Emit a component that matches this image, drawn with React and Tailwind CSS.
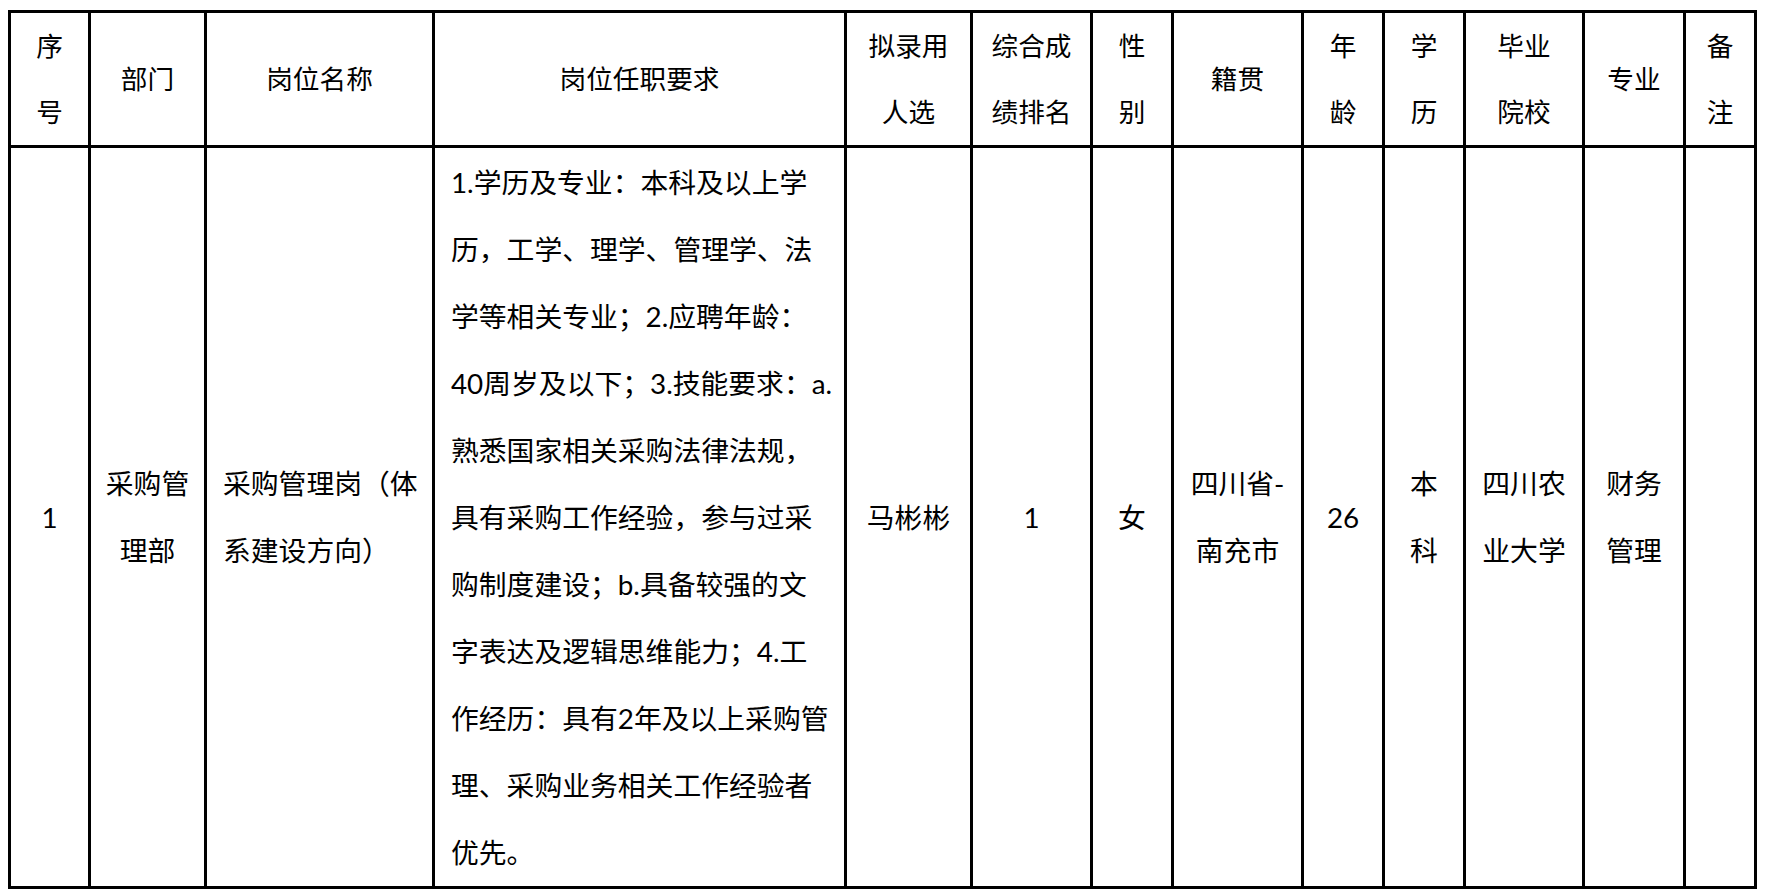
import React from "react";

const head = [
  { w: "w-[80px]", lines: ["序", "号"] },
  { w: "w-[116px]", lines: ["部门"] },
  { w: "w-[228px]", lines: ["岗位名称"] },
  { w: "w-[412px]", lines: ["岗位任职要求"] },
  { w: "w-[126px]", lines: ["拟录用", "人选"] },
  { w: "w-[120px]", lines: ["综合成", "绩排名"] },
  { w: "w-[81px]", lines: ["性", "别"] },
  { w: "w-[130px]", lines: ["籍贯"] },
  { w: "w-[81px]", lines: ["年", "龄"] },
  { w: "w-[81px]", lines: ["学", "历"] },
  { w: "w-[119px]", lines: ["毕业", "院校"] },
  { w: "w-[101px]", lines: ["专业"] },
  { w: "w-[71px]", lines: ["备", "注"] },
];

const requirement = [
  "1.学历及专业：本科及以上学",
  "历，工学、理学、管理学、法",
  "学等相关专业；2.应聘年龄：",
  "40周岁及以下；3.技能要求：a.",
  "熟悉国家相关采购法律法规，",
  "具有采购工作经验，参与过采",
  "购制度建设；b.具备较强的文",
  "字表达及逻辑思维能力；4.工",
  "作经历：具有2年及以上采购管",
  "理、采购业务相关工作经验者",
  "优先。",
];

const row = [
  { lines: ["1"] },
  { lines: ["采购管", "理部"] },
  { lines: ["采购管理岗（体", "系建设方向）"], left: true },
  { lines: requirement, left: true },
  { lines: ["马彬彬"] },
  { lines: ["1"] },
  { lines: ["女"] },
  { lines: ["四川省-", "南充市"] },
  { lines: ["26"] },
  { lines: ["本", "科"] },
  { lines: ["四川农", "业大学"] },
  { lines: ["财务", "管理"] },
  { lines: [] },
];

function Lines({ lines }) {
  return lines.map((l, i) => (
    <div key={i} className="whitespace-nowrap">
      {l}
    </div>
  ));
}

export default function App() {
  return (
    <div className="min-h-screen bg-white pt-[10px] pl-[8px] text-black font-[family-name:Lato,'Noto_Sans_CJK_SC',sans-serif]">
      <table className="table-fixed border-separate border-spacing-0 w-[1749px] border-l-[3px] border-t-[3px] border-black">
        <colgroup>
          {head.map((h, i) => (
            <col key={i} className={h.w} />
          ))}
        </colgroup>
        <thead>
          <tr>
            {head.map((h, i) => (
              <th
                key={i}
                className="h-[135px] p-0 border-r-[3px] border-b-[3px] border-black align-middle text-center font-normal text-[26.67px] leading-[66px]"
              >
                <Lines lines={h.lines} />
              </th>
            ))}
          </tr>
        </thead>
        <tbody>
          <tr>
            {row.map((c, i) => (
              <td
                key={i}
                className={
                  c.left
                    ? "h-[741px] py-0 pl-4 pr-0 border-r-[3px] border-b-[3px] border-black align-middle text-left text-[27.8px] leading-[67px]"
                    : "h-[741px] p-0 border-r-[3px] border-b-[3px] border-black align-middle text-center text-[27.8px] leading-[67px]"
                }
              >
                <Lines lines={c.lines} />
              </td>
            ))}
          </tr>
        </tbody>
      </table>
    </div>
  );
}
